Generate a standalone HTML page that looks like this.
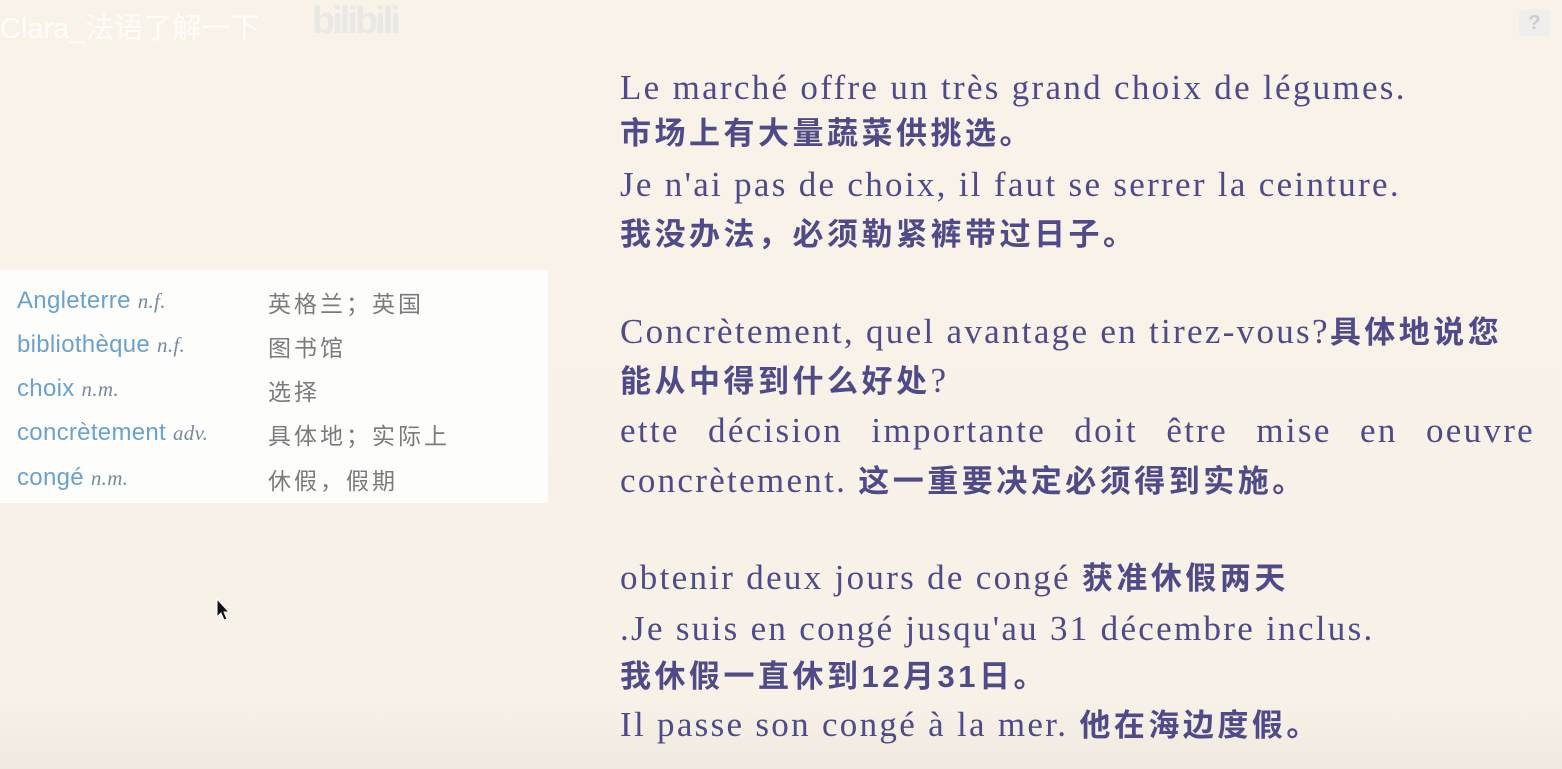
<!DOCTYPE html>
<html><head><meta charset="utf-8"><style>
body{margin:0;width:1562px;height:769px;overflow:hidden;background:linear-gradient(#f8f2e9 0,#f7f1e8 700px,#efe9df 769px);position:relative;font-family:"Liberation Serif","Noto Serif CJK SC",serif;}
.l{position:absolute;left:620px;white-space:nowrap;font-size:35px;letter-spacing:2.3px;line-height:49px;color:#4f4a88;}
.c{font-family:"Liberation Sans","Noto Sans CJK SC",sans-serif;font-weight:bold;font-size:31px;letter-spacing:3.5px;}
.j{width:915px;text-align:justify;text-align-last:justify;white-space:normal;}
.box{position:absolute;left:0;top:270px;width:548px;height:233px;background:#fdfdfc;}
.r{position:absolute;left:17px;font-family:"Liberation Sans",sans-serif;font-size:24px;color:#6aa2cc;letter-spacing:0.3px}
.r i{font-family:"Liberation Serif",serif;font-size:21px;color:#7a8a9a;}
.z{position:absolute;left:268px;font-family:"Noto Sans CJK SC",sans-serif;font-size:23px;letter-spacing:3px;color:#7b7b7b;}
</style></head><body>
<div style="position:absolute;left:0;top:5px;font-family:'Liberation Sans','Noto Sans CJK SC',sans-serif;font-size:29px;color:#fffdf9;">Clara_法语了解一下</div>
<div style="position:absolute;left:312px;top:0px;width:118px;height:42px;color:#e6e6e6;font:bold 38px 'Liberation Sans',sans-serif;letter-spacing:-3px;opacity:.8">bilibili</div>
<div style="position:absolute;left:1519px;top:10px;width:31px;height:26px;background:#f0eeec;border-radius:3px;color:#ccc;font:bold 20px 'Liberation Sans',sans-serif;text-align:center;line-height:26px">?</div>

<div class="l" style="top:63px">Le marché offre un très grand choix de légumes.</div>
<div class="l c" style="top:109px">市场上有大量蔬菜供挑选。</div>
<div class="l" style="top:160px">Je n'ai pas de choix, il faut se serrer la ceinture.</div>
<div class="l c" style="top:210px">我没办法，必须勒紧裤带过日子。</div>

<div class="l" style="top:307px">Concrètement, quel avantage en tirez-vous?<span class="c">具体地说您</span></div>
<div class="l c" style="top:356px">能从中得到什么好处<span style="font-family:'Liberation Serif',serif;font-weight:normal;font-size:35px">?</span></div>
<div class="l j" style="top:406px">ette décision importante doit être mise en oeuvre</div>
<div class="l" style="top:456px">concrètement. <span class="c">这一重要决定必须得到实施。</span></div>

<div class="l" style="top:553px">obtenir deux jours de congé <span class="c">获准休假两天</span></div>
<div class="l" style="top:604px">.Je suis en congé jusqu'au 31 décembre inclus.</div>
<div class="l c" style="top:652px">我休假一直休到12月31日。</div>
<div class="l" style="top:700px">Il passe son congé à la mer. <span class="c">他在海边度假。</span></div>

<div class="box">
<div class="r" style="top:17px">Angleterre <i>n.f.</i></div><div class="z" style="top:15px">英格兰；英国</div>
<div class="r" style="top:61px">bibliothèque <i>n.f.</i></div><div class="z" style="top:59px">图书馆</div>
<div class="r" style="top:105px">choix <i>n.m.</i></div><div class="z" style="top:103px">选择</div>
<div class="r" style="top:149px">concrètement <i>adv.</i></div><div class="z" style="top:147px">具体地；实际上</div>
<div class="r" style="top:194px">congé <i>n.m.</i></div><div class="z" style="top:192px">休假，假期</div>
</div>
<svg style="position:absolute;left:216px;top:598px" width="16" height="26" viewBox="0 0 16 26"><path d="M1 1 L1 19 L5 15 L8 22 L11 21 L8 14 L13 14 Z" fill="#111" stroke="#fff" stroke-width="1"/></svg>
</body></html>
